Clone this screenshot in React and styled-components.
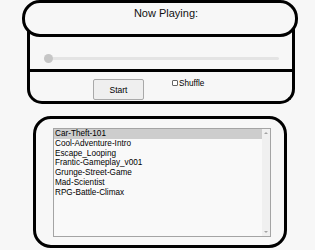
import React, { useState } from "react";
import styled, { createGlobalStyle } from "styled-components";

const Global = createGlobalStyle`
  html, body { margin: 0; padding: 0; background: #f7f7f7; }
  body { font-family: "Liberation Sans", Arial, sans-serif; color: #000; }
`;

const Page = styled.div`
  width: 315px;
  height: 250px;
  padding-left: 22px;
  box-sizing: border-box;
  display: flex;
  flex-direction: column;
  overflow: hidden;
`;

const Player = styled.section`
  width: 276px;
  display: flex;
  flex-direction: column;
`;

const Header = styled.div`
  position: relative;
  z-index: 1;
  height: 37px;
  box-sizing: border-box;
  border: 3px solid #000;
  border-radius: 18px;
  background: #f7f7f7;
  padding: 4px 0 0 12px;
  font-size: 11px;
  line-height: 13px;
  text-align: center;
  color: #111;
`;

const Panel = styled.div`
  margin: -8px 3px 0 5px;
  border: 3px solid #000;
  border-top: none;
  border-radius: 0 0 15px 15px;
  display: flex;
  flex-direction: column;
`;

const SliderRow = styled.div`
  height: 43px;
  box-sizing: border-box;
  padding: 25px 0 0 14px;
  border-bottom: 3px solid #000;
`;

const Range = styled.input`
  -webkit-appearance: none;
  appearance: none;
  display: block;
  margin: 0;
  width: 235px;
  height: 9px;
  background: transparent;
  &::-webkit-slider-runnable-track {
    height: 3px;
    background: #e4e4e4;
    border-radius: 2px;
  }
  &::-webkit-slider-thumb {
    -webkit-appearance: none;
    width: 9px;
    height: 9px;
    margin-top: -3px;
    border-radius: 50%;
    background: #c6c6c6;
  }
`;

const Controls = styled.div`
  height: 29px;
  display: flex;
  align-items: flex-start;
  padding-left: 63px;
  gap: 28px;
`;

const Button = styled.button`
  margin-top: 7px;
  width: 51px;
  height: 21px;
  box-sizing: border-box;
  border: 1px solid #a9a9a9;
  border-radius: 2px;
  background: #efefef;
  font-family: "Liberation Sans", Arial, sans-serif;
  font-size: 8.5px;
  color: #000;
  padding: 0;
`;

const CheckLabel = styled.label`
  margin-top: 7px;
  display: flex;
  align-items: center;
  font-size: 8.2px;
  line-height: 9px;
  color: #000;
`;

const Check = styled.input`
  -webkit-appearance: none;
  appearance: none;
  width: 6px;
  height: 6px;
  margin: 0 1px 1px 0;
  border: 1px solid #666;
  border-radius: 1px;
  background: #fff;
`;

const Library = styled.section`
  margin: 12px 0 0 11px;
  width: 254px;
  height: 132px;
  box-sizing: border-box;
  border: 3px solid #000;
  border-radius: 18px;
  padding: 9px 0 0 17px;
`;

const ListBox = styled.div`
  width: 218px;
  height: 109px;
  box-sizing: border-box;
  border: 1px solid #a4a4a4;
  background: #f9f9f9;
  display: flex;
`;

const Options = styled.ul`
  flex: 1;
  list-style: none;
  margin: 0;
  padding: 0;
  font-size: 8.2px;
  line-height: 9.8px;
`;

const Option = styled.li`
  padding-left: 1px;
  background: ${(p) => (p.$selected ? "#cdcdcd" : "transparent")};
  color: #000;
  white-space: nowrap;
  cursor: default;
`;

const Scrollbar = styled.div`
  width: 8px;
  background: #f0f0f0;
  display: flex;
  flex-direction: column;
  justify-content: space-between;
  align-items: center;
  padding: 3px 0;
`;

const Arrow = styled.span`
  width: 0;
  height: 0;
  border-left: 2px solid transparent;
  border-right: 2px solid transparent;
  ${(p) =>
    p.$down
      ? "border-top: 2px solid #a3a3a3;"
      : "border-bottom: 2px solid #a3a3a3;"}
`;

const tracks = [
  "Car-Theft-101",
  "Cool-Adventure-Intro",
  "Escape_Looping",
  "Frantic-Gameplay_v001",
  "Grunge-Street-Game",
  "Mad-Scientist",
  "RPG-Battle-Climax",
];

export default function App() {
  const [selected, setSelected] = useState(0);
  return (
    <Page>
      <Global />
      <Player>
        <Header>Now Playing:</Header>
        <Panel>
          <SliderRow>
            <Range type="range" min="0" max="100" defaultValue="0" />
          </SliderRow>
          <Controls>
            <Button>Start</Button>
            <CheckLabel>
              <Check type="checkbox" />
              Shuffle
            </CheckLabel>
          </Controls>
        </Panel>
      </Player>
      <Library>
        <ListBox role="listbox">
          <Options>
            {tracks.map((t, i) => (
              <Option
                key={t}
                role="option"
                aria-selected={i === selected}
                $selected={i === selected}
                onClick={() => setSelected(i)}
              >
                {t}
              </Option>
            ))}
          </Options>
          <Scrollbar>
            <Arrow />
            <Arrow $down />
          </Scrollbar>
        </ListBox>
      </Library>
    </Page>
  );
}
